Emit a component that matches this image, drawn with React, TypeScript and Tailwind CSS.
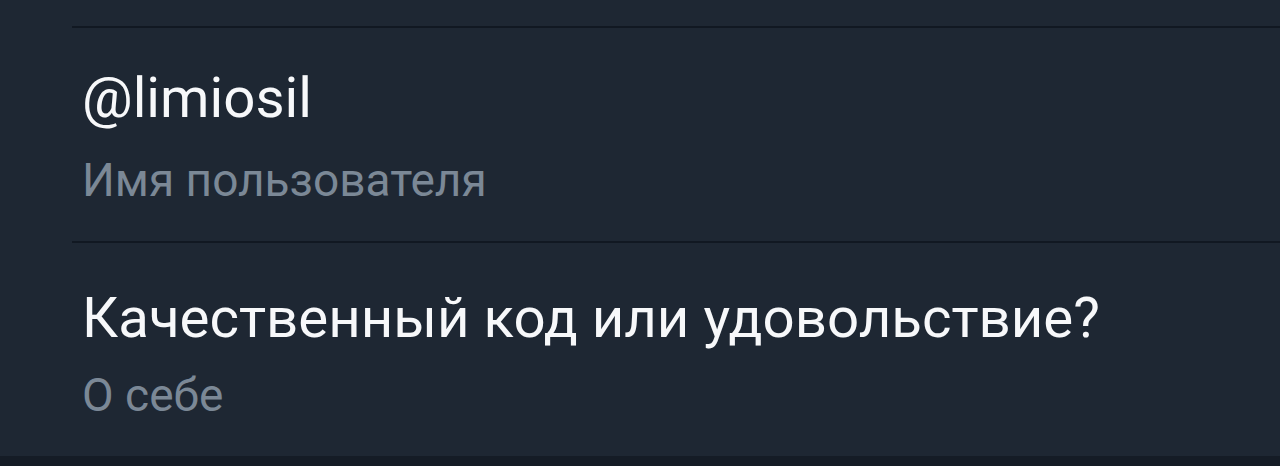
import React from "react";

// Profile info rows: value on top, muted label below
interface InfoRowProps {
    value: string;
    label: string;
    className?: string;
}

const InfoRow: React.FC<InfoRowProps> = ({ value, label, className }) => {
    return (
        <div className="flex flex-col">
            <div className="ml-[72px] h-[2px] bg-[#111822]" />
            <div className={`flex flex-col pl-[82px] ${className ?? ""}`}>
                <div className="text-[56.4px] leading-[64px] text-[#f7f8fa]">{value}</div>
                <div className="text-[46px] leading-[52px] text-[#7b8896]">{label}</div>
            </div>
        </div>
    );
};

const App: React.FC = () => {
    return (
        <div
            className="w-[1280px] h-[466px] overflow-hidden bg-[#1e2733] flex flex-col"
            style={{ fontFamily: "Roboto, 'Noto Sans', sans-serif" }}
        >
            <div className="h-[26px]" />
            <InfoRow value="@limiosil" label="Имя пользователя" className="pt-[38px] pb-[35px] gap-[24px]" />
            <InfoRow value="Качественный код или удовольствие?" label="О себе" className="pt-[43px] pb-[35px] gap-[19px]" />
            <div className="flex-1 bg-[#151c26]" />
        </div>
    );
};

export default App;
